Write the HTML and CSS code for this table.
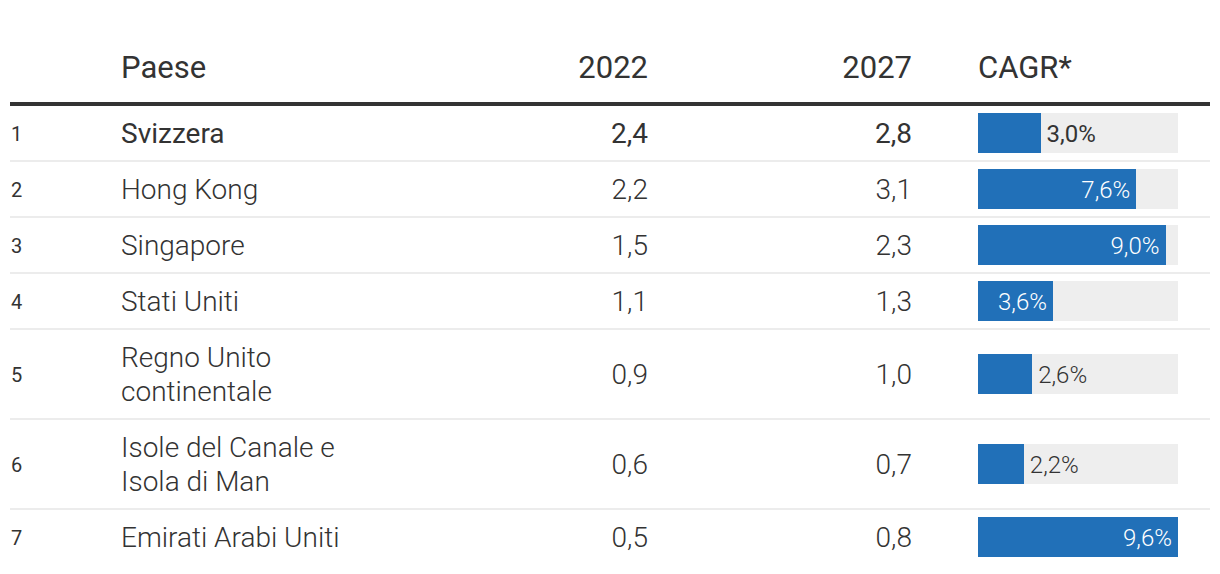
FILE: index.html
```html
<!DOCTYPE html>
<html lang="it">
<head>
<meta charset="utf-8">
<title>Paese CAGR</title>
<link rel="stylesheet" href="styles.css">
</head>
<body>
<div class="table">
  <div class="row head">
    <div class="c-rank"></div>
    <div class="c-name">Paese</div>
    <div class="c-num">2022</div>
    <div class="c-num">2027</div>
    <div class="c-bar">CAGR*</div>
  </div>
  <div class="row first">
    <div class="c-rank">1</div>
    <div class="c-name">Svizzera</div>
    <div class="c-num">2,4</div>
    <div class="c-num">2,8</div>
    <div class="c-bar"><div class="track"><div class="fill" style="width:31.25%"></div><span class="lbl out">3,0%</span></div></div>
  </div>
  <div class="row">
    <div class="c-rank">2</div>
    <div class="c-name">Hong Kong</div>
    <div class="c-num">2,2</div>
    <div class="c-num">3,1</div>
    <div class="c-bar"><div class="track"><div class="fill" style="width:79.17%"><span class="lbl in">7,6%</span></div></div></div>
  </div>
  <div class="row">
    <div class="c-rank">3</div>
    <div class="c-name">Singapore</div>
    <div class="c-num">1,5</div>
    <div class="c-num">2,3</div>
    <div class="c-bar"><div class="track"><div class="fill" style="width:93.75%"><span class="lbl in">9,0%</span></div></div></div>
  </div>
  <div class="row">
    <div class="c-rank">4</div>
    <div class="c-name">Stati Uniti</div>
    <div class="c-num">1,1</div>
    <div class="c-num">1,3</div>
    <div class="c-bar"><div class="track"><div class="fill" style="width:37.5%"><span class="lbl in">3,6%</span></div></div></div>
  </div>
  <div class="row">
    <div class="c-rank">5</div>
    <div class="c-name">Regno Unito<br>continentale</div>
    <div class="c-num">0,9</div>
    <div class="c-num">1,0</div>
    <div class="c-bar"><div class="track"><div class="fill" style="width:27.08%"></div><span class="lbl out">2,6%</span></div></div>
  </div>
  <div class="row">
    <div class="c-rank">6</div>
    <div class="c-name">Isole del Canale e<br>Isola di Man</div>
    <div class="c-num">0,6</div>
    <div class="c-num">0,7</div>
    <div class="c-bar"><div class="track"><div class="fill" style="width:22.92%"></div><span class="lbl out">2,2%</span></div></div>
  </div>
  <div class="row last">
    <div class="c-rank">7</div>
    <div class="c-name">Emirati Arabi Uniti</div>
    <div class="c-num">0,5</div>
    <div class="c-num">0,8</div>
    <div class="c-bar"><div class="track"><div class="fill" style="width:100%"><span class="lbl in">9,6%</span></div></div></div>
  </div>
</div>
</body>
</html>
```
FILE: styles.css
```css
html, body {
  margin: 0;
  padding: 0;
  background: #ffffff;
}
body {
  font-family: Roboto, "Liberation Sans", Arial, sans-serif;
  color: #333333;
  overflow: hidden;
}
.table {
  margin: 0 10px;
  width: 1200px;
}
.row {
  display: grid;
  grid-template-columns: 111px 347px 180px 264px 298px;
  align-items: center;
  border-bottom: 2px solid #ececec;
  min-height: 54px;
  font-size: 28px;
  line-height: 34px;
  font-weight: 300;
}
.row.last {
  border-bottom: 0;
}
.row.head {
  padding: 50px 0 16px;
  min-height: 0;
  font-size: 31px;
  line-height: 36px;
  font-weight: 400;
  border-bottom: 4px solid #333333;
}
.row.first {
  font-weight: 400;
}
.c-rank {
  font-size: 20px;
  font-weight: 400;
  padding: 2px 0 0 1px;
}
.c-name {
  white-space: nowrap;
  padding: 11px 0 9px;
}
.row.head .c-name,
.row.head .c-num,
.row.head .c-rank {
  padding: 0;
}
.c-num {
  text-align: right;
  padding-top: 2px;
}
.c-bar {
  padding-left: 66px;
}
.track {
  width: 200px;
  height: 40px;
  background: #eeeeee;
  display: flex;
  align-items: center;
}
.fill {
  height: 40px;
  background: #2170b8;
  display: flex;
  align-items: center;
  justify-content: flex-end;
  flex: none;
}
.lbl {
  font-size: 24px;
  line-height: 40px;
  font-weight: 300;
  padding-top: 2px;
}
.lbl.in {
  color: #ffffff;
  padding-right: 6px;
}
.lbl.out {
  color: #333333;
  padding-left: 6px;
}
.row.first .lbl {
  font-weight: 400;
}
```
